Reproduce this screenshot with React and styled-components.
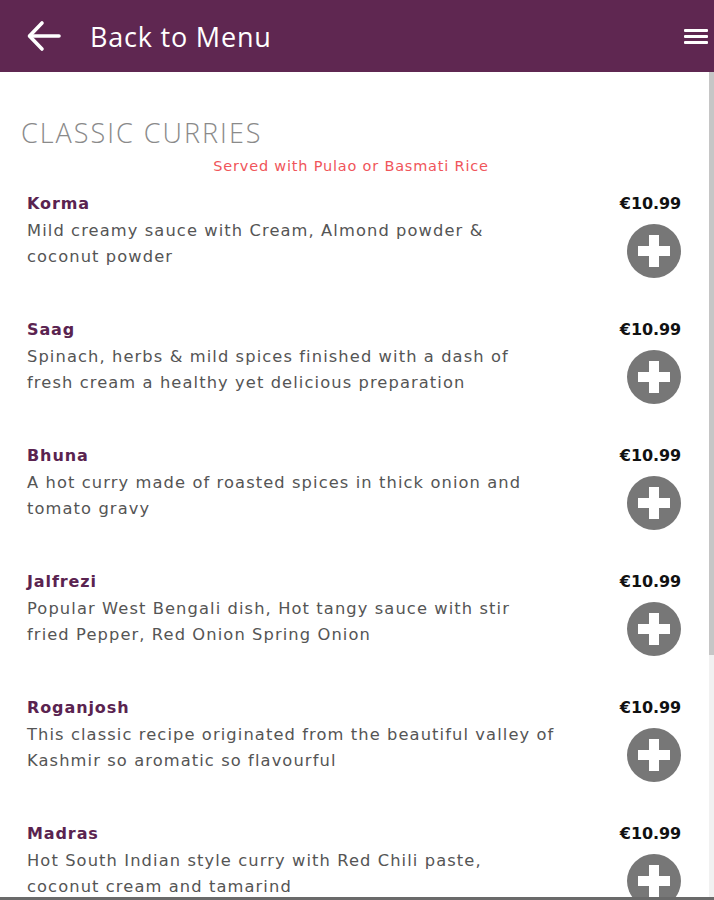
import React from "react";
import styled, { createGlobalStyle } from "styled-components";

const Global = createGlobalStyle`
  html, body { margin: 0; padding: 0; background: #fff; }
  body { font-family: "DejaVu Sans", "Open Sans", sans-serif; }
  * { box-sizing: border-box; }
`;

const Page = styled.div`
  height: 900px;
  display: flex;
  flex-direction: column;
  border-bottom: 3px solid #6a6a6a;
`;

const Header = styled.header`
  height: 72px;
  flex: none;
  background: #5f2751;
  display: flex;
  align-items: center;
  padding: 0 6px 0 26px;
  color: #fff;
`;

const BackTitle = styled.span`
  font-family: "Open Sans", sans-serif;
  font-size: 27px;
  font-weight: 400;
  margin-left: 28px;
  flex: 1;
  letter-spacing: 0.8px;
`;

const Body = styled.div`
  flex: 1;
  min-height: 0;
  display: flex;
`;

const Scroller = styled.main`
  flex: 1;
  overflow-y: auto;
  scrollbar-width: none;
  &::-webkit-scrollbar { display: none; }
`;

const Track = styled.div`
  width: 5px;
  flex: none;
  background: #f1f1f1;
  display: flex;
  flex-direction: column;
`;

const Thumb = styled.div`
  height: 583px;
  background: #c6c6c6;
`;

const Section = styled.section`
  padding: 46px 28px 40px 21px;
`;

const SectionTitle = styled.h2`
  margin: 0;
  font-family: "Open Sans", sans-serif;
  font-size: 27px;
  font-weight: 300;
  color: #8a8a8a;
  letter-spacing: 2px;
  line-height: 30px;
`;

const Note = styled.p`
  margin: 7px 0 0;
  text-align: center;
  color: #f0555a;
  font-size: 14.5px;
  line-height: 22px;
  font-weight: 400;
  letter-spacing: 0.8px;
`;

const List = styled.div`
  display: flex;
  flex-direction: column;
  gap: 40px;
  margin-top: 15px;
  padding-left: 6px;
`;

const Item = styled.article`
  display: grid;
  grid-template-columns: 1fr auto;
  column-gap: 20px;
`;

const Info = styled.div`
  display: flex;
  flex-direction: column;
`;

const Name = styled.h3`
  margin: 0;
  font-size: 16px;
  font-weight: 700;
  color: #5a2350;
  line-height: 24px;
  letter-spacing: 0.9px;
`;

const Desc = styled.p`
  margin: 2px 0 0;
  font-size: 16.3px;
  color: #555;
  line-height: 26px;
  letter-spacing: 1.1px;
`;

const Side = styled.div`
  display: flex;
  flex-direction: column;
  align-items: flex-end;
`;

const Price = styled.span`
  font-size: 16px;
  font-weight: 700;
  color: #111;
  line-height: 24px;
  letter-spacing: -0.1px;
`;

const AddButton = styled.button`
  margin-top: 8px;
  width: 54px;
  height: 54px;
  padding: 0;
  border: none;
  background: none;
  cursor: pointer;
  display: block;
`;

const Burger = () => (
  <svg width="24" height="18" viewBox="0 0 24 18">
    <rect x="0" y="2" width="24" height="3" rx="1" fill="#fff" />
    <rect x="0" y="8" width="24" height="3" rx="1" fill="#fff" />
    <rect x="0" y="14" width="24" height="3" rx="1" fill="#fff" />
  </svg>
);

const Arrow = () => (
  <svg width="36" height="36" viewBox="0 0 36 36" fill="none" stroke="#fff" strokeWidth="3.6" strokeLinecap="round" strokeLinejoin="round">
    <path d="M33 18H4" />
    <path d="M16 5L3.5 18L16 31" />
  </svg>
);

const Plus = () => (
  <svg width="54" height="54" viewBox="0 0 54 54">
    <circle cx="27" cy="27" r="27" fill="#777" />
    <rect x="11" y="22" width="32" height="10" fill="#fff" />
    <rect x="22" y="11" width="10" height="32" fill="#fff" />
  </svg>
);

const items = [
  { name: "Korma", lines: ["Mild creamy sauce with Cream, Almond powder &", "coconut powder"] },
  { name: "Saag", lines: ["Spinach, herbs & mild spices finished with a dash of", "fresh cream a healthy yet delicious preparation"] },
  { name: "Bhuna", lines: ["A hot curry made of roasted spices in thick onion and", "tomato gravy"] },
  { name: "Jalfrezi", lines: ["Popular West Bengali dish, Hot tangy sauce with stir", "fried Pepper, Red Onion Spring Onion"] },
  { name: "Roganjosh", lines: ["This classic recipe originated from the beautiful valley of", "Kashmir so aromatic so flavourful"] },
  { name: "Madras", lines: ["Hot South Indian style curry with Red Chili paste,", "coconut cream and tamarind"] },
  { name: "Vindaloo", lines: ["Very hot curry with potatoes, chili and vinegar", "a Goan speciality"] },
];

export default function App() {
  return (
    <>
      <Global />
      <Page>
        <Header>
          <Arrow />
          <BackTitle>Back to Menu</BackTitle>
          <Burger />
        </Header>
        <Body>
          <Scroller>
            <Section>
              <SectionTitle>CLASSIC CURRIES</SectionTitle>
              <Note>Served with Pulao or Basmati Rice</Note>
              <List>
                {items.map((it) => (
                  <Item key={it.name}>
                    <Info>
                      <Name>{it.name}</Name>
                      <Desc>
                        {it.lines[0]}
                        <br />
                        {it.lines[1]}
                      </Desc>
                    </Info>
                    <Side>
                      <Price>€10.99</Price>
                      <AddButton aria-label={`Add ${it.name}`}>
                        <Plus />
                      </AddButton>
                    </Side>
                  </Item>
                ))}
              </List>
            </Section>
          </Scroller>
          <Track aria-hidden="true">
            <Thumb />
          </Track>
        </Body>
      </Page>
    </>
  );
}
